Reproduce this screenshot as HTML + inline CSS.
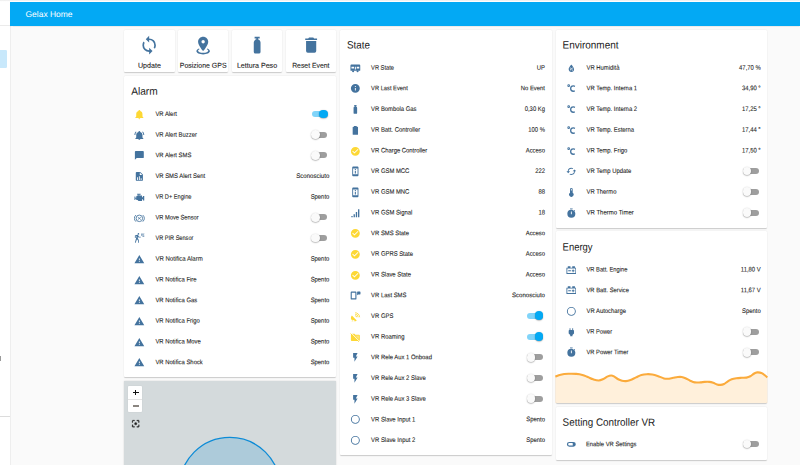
<!DOCTYPE html>
<html><head><meta charset="utf-8"><title>Gelax Home</title>
<style>
html,body{margin:0;padding:0}
body{width:800px;height:465px;overflow:hidden;position:relative;background:#fafafa;font-family:"Liberation Sans",sans-serif;color:#212121}
.side{position:absolute;left:0;top:0;width:10.8px;height:465px;background:#fff;border-right:0.7px solid #eeeeee;box-sizing:border-box}
.sel{position:absolute;left:0;top:50.1px;width:7.05px;height:17.6px;background:#c8e8fb;border-radius:0 1.3px 1.3px 0}
.shl{position:absolute;left:0;top:25.2px;width:10.2px;height:0.6px;background:#ebebeb}
.sdiv{position:absolute;left:0;top:415.7px;width:10.2px;height:0.6px;background:#dcdcdc}
.topstrip{position:absolute;left:0;top:0;width:800px;height:2.0px;background:linear-gradient(#efefef 0,#f2f2f2 0.8px,#fdfdfd 1.0px,#fefefe 2px)}
.hdr{position:absolute;left:10.2px;top:1.95px;width:790px;height:24.1px;background:#03a9f4;box-shadow:0 0.5px 1px rgba(0,0,0,0.06)}
.htx{font-size:8.3px;line-height:10px;color:#fff !important}
.card{position:absolute;background:#fff;border-radius:0.9px;box-shadow:0 0.9px 0.8px rgba(0,0,0,0.105),0 0.3px 1.7px rgba(0,0,0,0.07),0 1.2px 0.4px -0.9px rgba(0,0,0,0.12)}
.title,.lbl,.btxt,.htx{position:absolute;left:0;top:0;white-space:nowrap;transform-origin:0 0;color:#212121}
.title{font-size:10.6px;line-height:12px}
.lbl{font-size:6.65px;line-height:10px;-webkit-text-stroke:0.09px #212121}
.btxt{font-size:7.1px;line-height:10px;-webkit-text-stroke:0.1px #212121}
.r{text-align:right;transform-origin:100% 0}
.c{text-align:center;transform-origin:50% 0}


.trk{position:absolute;width:15.9px;height:6px;border-radius:3px;background:#000;opacity:.38}
.trk.on{background:#03a9f4;opacity:.5}
.knob{position:absolute;width:8.6px;height:8.6px;border-radius:50%;background:#fafafa;box-shadow:0 0.5px 1.3px rgba(0,0,0,0.42)}
.knob.on{background:#03a9f4}
.map{position:absolute;background:#d4dadc;overflow:hidden;border-radius:1px;box-shadow:0 0.9px 0.9px rgba(0,0,0,0.14),0 0.4px 2.1px rgba(0,0,0,0.12)}
.zoom{position:absolute;background:#fff;border-radius:0.8px;box-shadow:0 0 1px rgba(0,0,0,0.18)}
</style></head><body>
<div class="side"><div class="sel"></div><div class="shl"></div><div style="position:absolute;left:0;top:356px;width:0.9px;height:4.8px;background:#9a9a9a"></div><div class="sdiv"></div></div>
<div class="topstrip"></div>
<div class="hdr"></div>
<div class="htx" style="transform:matrix(1.02,0.0005,0,1,25.50,9.02)">Gelax Home</div>
<div class="card" style="left:124.2px;top:29.7px;width:50.4px;height:42px"></div>
<svg style="position:absolute;left:139.10px;top:34.85px" width="20.3" height="20.3" viewBox="0 0 24 24"><path fill="#44739e" d="M12,18A6,6 0 0,1 6,12C6,11 6.25,10.03 6.7,9.2L5.24,7.74C4.46,8.97 4,10.43 4,12A8,8 0 0,0 12,20V23L16,19L12,15M12,4V1L8,5L12,9V6A6,6 0 0,1 18,12C18,13 17.75,13.97 17.3,14.8L18.76,16.26C19.54,15.03 20,13.57 20,12A8,8 0 0,0 12,4Z"/></svg>
<div class="btxt c" style="width:298.80px;transform:matrix(1.0,0.0005,0,1,0,60.74)">Update</div>
<div class="card" style="left:178.0px;top:29.7px;width:50.4px;height:42px"></div>
<svg style="position:absolute;left:192.90px;top:34.85px" width="20.3" height="20.3" viewBox="0 0 24 24"><path fill="#44739e" d="M12,2C15.31,2 18,4.66 18,7.95C18,12.41 12,19 12,19C12,19 6,12.41 6,7.95C6,4.66 8.69,2 12,2M12,6A2,2 0 0,0 10,8A2,2 0 0,0 12,10A2,2 0 0,0 14,8A2,2 0 0,0 12,6M20,19C20,21.21 16.42,23 12,23C7.58,23 4,21.21 4,19C4,17.71 5.22,16.56 7.11,15.83L7.75,16.74C6.67,17.19 6,17.81 6,18.5C6,19.88 8.69,21 12,21C15.31,21 18,19.88 18,18.5C18,17.81 17.33,17.19 16.25,16.74L16.89,15.83C18.78,16.56 20,17.71 20,19Z"/></svg>
<div class="btxt c" style="width:406.40px;transform:matrix(0.979,0.0005,0,1,0,60.74)">Posizione GPS</div>
<div class="card" style="left:231.8px;top:29.7px;width:50.4px;height:42px"></div>
<svg style="position:absolute;left:246.70px;top:34.85px" width="20.3" height="20.3" viewBox="0 0 24 24"><path fill="#44739e" d="M16,9V14L16,20A2,2 0 0,1 14,22H10A2,2 0 0,1 8,20V14L8,9C8,7.14 9.27,5.57 11,5.13V4H9V2H15V4H13V5.13C14.73,5.57 16,7.14 16,9Z"/></svg>
<div class="btxt c" style="width:514.00px;transform:matrix(1.0,0.0005,0,1,0,60.74)">Lettura Peso</div>
<div class="card" style="left:285.6px;top:29.7px;width:50.4px;height:42px"></div>
<svg style="position:absolute;left:300.50px;top:34.85px" width="20.3" height="20.3" viewBox="0 0 24 24"><path fill="#44739e" d="M19,4H15.5L14.5,3H9.5L8.5,4H5V6H19M6,19A2,2 0 0,0 8,21H16A2,2 0 0,0 18,19V7H6V19Z"/></svg>
<div class="btxt c" style="width:621.60px;transform:matrix(0.9638,0.0005,0,1,0,60.74)">Reset Event</div>
<div class="card" style="left:124.2px;top:76.00px;width:211.8px;height:301.00px"></div>
<div class="title" style="transform:matrix(0.9579,0.0005,0,1,131.20,84.83)">Alarm</div>
<svg style="position:absolute;left:134.30px;top:109.05px" width="10.7" height="10.7" viewBox="0 0 24 24"><path fill="#fdd835" d="M21,19V20H3V19L5,17V11C5,7.9 7.03,5.17 10,4.29C10,4.19 10,4.1 10,4A2,2 0 0,1 12,2A2,2 0 0,1 14,4C14,4.1 14,4.19 14,4.29C16.97,5.17 19,7.9 19,11V17L21,19M14,21A2,2 0 0,1 12,23A2,2 0 0,1 10,21"/></svg>
<div class="lbl" style="transform:matrix(0.8855,0.0005,0,1,155.40,108.95)">VR Alert</div>
<div class="trk on" style="left:311.50px;top:111.00px"></div><div class="knob on" style="left:318.95px;top:109.50px"></div>
<svg style="position:absolute;left:134.30px;top:129.74px" width="10.7" height="10.7" viewBox="0 0 24 24"><path fill="#44739e" d="M21,19V20H3V19L5,17V11C5,7.9 7.03,5.17 10,4.29C10,4.19 10,4.1 10,4A2,2 0 0,1 12,2A2,2 0 0,1 14,4C14,4.1 14,4.19 14,4.29C16.97,5.17 19,7.9 19,11V17L21,19M14,21A2,2 0 0,1 12,23A2,2 0 0,1 10,21M19.75,3.19L18.33,4.61C20.04,6.3 21,8.6 21,11H23C23,8.07 21.84,5.25 19.75,3.19M1,11H3C3,8.6 3.96,6.3 5.67,4.61L4.25,3.19C2.16,5.25 1,8.07 1,11Z"/></svg>
<div class="lbl" style="transform:matrix(0.8855,0.0005,0,1,155.40,129.64)">VR Alert Buzzer</div>
<div class="trk" style="left:311.50px;top:131.69px"></div><div class="knob" style="left:311.15px;top:130.34px"></div>
<svg style="position:absolute;left:134.30px;top:150.43px" width="10.7" height="10.7" viewBox="0 0 24 24"><path fill="#44739e" d="M20,2H4A2,2 0 0,0 2,4V22L6,18H20A2,2 0 0,0 22,16V4A2,2 0 0,0 20,2Z"/></svg>
<div class="lbl" style="transform:matrix(0.8855,0.0005,0,1,155.40,150.33)">VR Alert SMS</div>
<div class="trk" style="left:311.50px;top:152.38px"></div><div class="knob" style="left:311.15px;top:151.03px"></div>
<svg style="position:absolute;left:134.30px;top:171.12px" width="10.7" height="10.7" viewBox="0 0 24 24"><path fill="#44739e" d="M13,9H18.5L13,3.5V9M6,2H14L20,8V20A2,2 0 0,1 18,22H6C4.89,22 4,21.1 4,20V4C4,2.89 4.89,2 6,2M7,20H9V14H7V20M11,20H13V12H11V20M15,20H17V16H15V20Z"/></svg>
<div class="lbl" style="transform:matrix(0.8855,0.0005,0,1,155.40,171.02)">VR SMS Alert Sent</div>
<div class="lbl r" style="width:329.30px;transform:matrix(0.9132,0.0005,0,1,0,171.02)">Sconosciuto</div>
<svg style="position:absolute;left:134.30px;top:191.81px" width="10.7" height="10.7" viewBox="0 0 24 24"><path fill="#44739e" d="M7,4V6H10V8H7L5,10V13H3V10H1V18H3V15H5V18H8L10,20H18V16H20V19H23V9H20V12H18V8H12V6H15V4H7Z"/></svg>
<div class="lbl" style="transform:matrix(0.8524,0.0005,0,1,155.40,191.71)">VR D+ Engine</div>
<div class="lbl r" style="width:329.30px;transform:matrix(0.8855,0.0005,0,1,0,191.71)">Spento</div>
<svg style="position:absolute;left:134.30px;top:212.50px" width="10.7" height="10.7" viewBox="0 0 24 24"><circle cx="12" cy="12" r="7.3" fill="none" stroke="#44739e" stroke-width="1.9"/><path fill="none" stroke="#44739e" stroke-width="1.6" d="M8.6,9.2L15.4,14.8M15.4,9.2L8.6,14.8"/><path fill="none" stroke="#44739e" stroke-width="1.9" d="M4.2,4.6A10.8,10.8 0 0,0 4.2,19.4M19.8,4.6A10.8,10.8 0 0,1 19.8,19.4"/></svg>
<div class="lbl" style="transform:matrix(0.8616,0.0005,0,1,155.40,212.40)">VR Move Sensor</div>
<div class="trk" style="left:311.50px;top:214.45px"></div><div class="knob" style="left:311.15px;top:213.10px"></div>
<svg style="position:absolute;left:134.30px;top:233.19px" width="10.7" height="10.7" viewBox="0 0 24 24"><path fill="#44739e" d="M10,0.2C9,0.2 8.2,1 8.2,2C8.2,3 9,3.8 10,3.8C11,3.8 11.8,3 11.8,2C11.8,1 11,0.2 10,0.2M15.67,1A7.33,7.33 0 0,0 23,8.33V7A6,6 0 0,1 17,1H15.67M18.33,1C18.33,3.58 20.42,5.67 23,5.67V4.33C21.16,4.33 19.67,2.84 19.67,1H18.33M21,1A2,2 0 0,0 23,3V1H21M7.92,4.03C7.75,4.03 7.58,4.06 7.42,4.11L2,5.8V11H3.8V7.33L5.91,6.67L2,22H3.8L6.67,13.89L9,17V22H10.8V15.59L8.31,11.05L9.04,8.18L10.12,10H15V8.2H11.38L9.38,4.87C9.08,4.37 8.54,4.03 7.92,4.03Z"/></svg>
<div class="lbl" style="transform:matrix(0.8433,0.0005,0,1,155.40,233.09)">VR PIR Sensor</div>
<div class="trk" style="left:311.50px;top:235.14px"></div><div class="knob" style="left:311.15px;top:233.79px"></div>
<svg style="position:absolute;left:134.30px;top:253.88px" width="10.7" height="10.7" viewBox="0 0 24 24"><path fill="#44739e" d="M13,14H11V10H13M13,18H11V16H13M1,21H23L12,2L1,21Z"/></svg>
<div class="lbl" style="transform:matrix(0.9105,0.0005,0,1,155.40,253.78)">VR Notifica Alarm</div>
<div class="lbl r" style="width:329.30px;transform:matrix(0.8855,0.0005,0,1,0,253.78)">Spento</div>
<svg style="position:absolute;left:134.30px;top:274.57px" width="10.7" height="10.7" viewBox="0 0 24 24"><path fill="#44739e" d="M13,14H11V10H13M13,18H11V16H13M1,21H23L12,2L1,21Z"/></svg>
<div class="lbl" style="transform:matrix(0.8855,0.0005,0,1,155.40,274.47)">VR Notifica Fire</div>
<div class="lbl r" style="width:329.30px;transform:matrix(0.8855,0.0005,0,1,0,274.47)">Spento</div>
<svg style="position:absolute;left:134.30px;top:295.26px" width="10.7" height="10.7" viewBox="0 0 24 24"><path fill="#44739e" d="M13,14H11V10H13M13,18H11V16H13M1,21H23L12,2L1,21Z"/></svg>
<div class="lbl" style="transform:matrix(0.8855,0.0005,0,1,155.40,295.16)">VR Notifica Gas</div>
<div class="lbl r" style="width:329.30px;transform:matrix(0.8855,0.0005,0,1,0,295.16)">Spento</div>
<svg style="position:absolute;left:134.30px;top:315.95px" width="10.7" height="10.7" viewBox="0 0 24 24"><path fill="#44739e" d="M13,14H11V10H13M13,18H11V16H13M1,21H23L12,2L1,21Z"/></svg>
<div class="lbl" style="transform:matrix(0.8855,0.0005,0,1,155.40,315.85)">VR Notifica Frigo</div>
<div class="lbl r" style="width:329.30px;transform:matrix(0.8855,0.0005,0,1,0,315.85)">Spento</div>
<svg style="position:absolute;left:134.30px;top:336.64px" width="10.7" height="10.7" viewBox="0 0 24 24"><path fill="#44739e" d="M13,14H11V10H13M13,18H11V16H13M1,21H23L12,2L1,21Z"/></svg>
<div class="lbl" style="transform:matrix(0.8855,0.0005,0,1,155.40,336.54)">VR Notifica Move</div>
<div class="lbl r" style="width:329.30px;transform:matrix(0.8855,0.0005,0,1,0,336.54)">Spento</div>
<svg style="position:absolute;left:134.30px;top:357.33px" width="10.7" height="10.7" viewBox="0 0 24 24"><path fill="#44739e" d="M13,14H11V10H13M13,18H11V16H13M1,21H23L12,2L1,21Z"/></svg>
<div class="lbl" style="transform:matrix(0.8855,0.0005,0,1,155.40,357.23)">VR Notifica Shock</div>
<div class="lbl r" style="width:329.30px;transform:matrix(0.8855,0.0005,0,1,0,357.23)">Spento</div>

<div class="card" style="left:339.9px;top:29.70px;width:211.8px;height:425.30px"></div>
<div class="title" style="transform:matrix(0.93,0.0005,0,1,346.90,38.53)">State</div>
<svg style="position:absolute;left:350.00px;top:62.75px" width="10.7" height="10.7" viewBox="0 0 24 24"><path fill="#44739e" fill-rule="evenodd" d="M3,3.5H21A2,2 0 0,1 23,5.5V16A1.2,1.2 0 0,1 21.8,17.2H2.2A1.2,1.2 0 0,1 1,16V5.5A2,2 0 0,1 3,3.5ZM3.2,8.2V12.2H9V8.2ZM10.8,8.2V14.5H13.2V8.2ZM15,8.2V12.2H20.8V8.2Z"/><circle fill="#44739e" cx="7" cy="18.6" r="2.3"/><circle fill="#44739e" cx="17" cy="18.6" r="2.3"/></svg>
<div class="lbl" style="transform:matrix(0.8591,0.0005,0,1,371.10,62.65)">VR State</div>
<div class="lbl r" style="width:545.00px;transform:matrix(0.8855,0.0005,0,1,0,62.65)">UP</div>
<svg style="position:absolute;left:350.00px;top:83.44px" width="10.7" height="10.7" viewBox="0 0 24 24"><path fill="#44739e" d="M13,9H11V7H13M13,17H11V11H13M12,2A10,10 0 0,0 2,12A10,10 0 0,0 12,22A10,10 0 0,0 22,12A10,10 0 0,0 12,2Z"/></svg>
<div class="lbl" style="transform:matrix(0.8643,0.0005,0,1,371.10,83.34)">VR Last Event</div>
<div class="lbl r" style="width:545.00px;transform:matrix(0.8855,0.0005,0,1,0,83.34)">No Event</div>
<svg style="position:absolute;left:350.00px;top:104.13px" width="10.7" height="10.7" viewBox="0 0 24 24"><path fill="#44739e" d="M16,9V14L16,20A2,2 0 0,1 14,22H10A2,2 0 0,1 8,20V14L8,9C8,7.14 9.27,5.57 11,5.13V4H9V2H15V4H13V5.13C14.73,5.57 16,7.14 16,9Z"/></svg>
<div class="lbl" style="transform:matrix(0.8855,0.0005,0,1,371.10,104.03)">VR Bombola Gas</div>
<div class="lbl r" style="width:545.00px;transform:matrix(0.8855,0.0005,0,1,0,104.03)">0,30 Kg</div>
<svg style="position:absolute;left:350.00px;top:124.82px" width="10.7" height="10.7" viewBox="0 0 24 24"><path fill="#44739e" d="M16.67,4H15V2H9V4H7.33A1.33,1.33 0 0,0 6,5.33V20.67C6,21.4 6.6,22 7.33,22H16.67A1.33,1.33 0 0,0 18,20.67V5.33C18,4.6 17.4,4 16.67,4Z"/></svg>
<div class="lbl" style="transform:matrix(0.8855,0.0005,0,1,371.10,124.72)">VR Batt. Controller</div>
<div class="lbl r" style="width:545.00px;transform:matrix(0.8855,0.0005,0,1,0,124.72)">100 %</div>
<svg style="position:absolute;left:350.00px;top:145.51px" width="10.7" height="10.7" viewBox="0 0 24 24"><path fill="#fdd835" d="M12,2A10,10 0 0,0 2,12A10,10 0 0,0 12,22A10,10 0 0,0 22,12A10,10 0 0,0 12,2M10,17L5,12L6.41,10.59L10,14.17L17.59,6.58L19,8L10,17Z"/></svg>
<div class="lbl" style="transform:matrix(0.8855,0.0005,0,1,371.10,145.41)">VR Charge Controller</div>
<div class="lbl r" style="width:545.00px;transform:matrix(0.8855,0.0005,0,1,0,145.41)">Acceso</div>
<svg style="position:absolute;left:350.00px;top:166.20px" width="10.7" height="10.7" viewBox="0 0 24 24"><path fill="#44739e" d="M17,18.5H7V5.5H17M17,1H7C5.89,1 5,1.89 5,3V21A2,2 0 0,0 7,23H17A2,2 0 0,0 19,21V3C19,1.89 18.1,1 17,1M10.8,7H13.2V9.2H10.8V7M10.8,10.8H13.2V17H10.8V10.8Z"/></svg>
<div class="lbl" style="transform:matrix(0.8855,0.0005,0,1,371.10,166.10)">VR GSM MCC</div>
<div class="lbl r" style="width:545.00px;transform:matrix(0.8855,0.0005,0,1,0,166.10)">222</div>
<svg style="position:absolute;left:350.00px;top:186.89px" width="10.7" height="10.7" viewBox="0 0 24 24"><path fill="#44739e" d="M17,18.5H7V5.5H17M17,1H7C5.89,1 5,1.89 5,3V21A2,2 0 0,0 7,23H17A2,2 0 0,0 19,21V3C19,1.89 18.1,1 17,1M10.8,7H13.2V9.2H10.8V7M10.8,10.8H13.2V17H10.8V10.8Z"/></svg>
<div class="lbl" style="transform:matrix(0.8855,0.0005,0,1,371.10,186.79)">VR GSM MNC</div>
<div class="lbl r" style="width:545.00px;transform:matrix(0.8855,0.0005,0,1,0,186.79)">88</div>
<svg style="position:absolute;left:350.00px;top:207.58px" width="10.7" height="10.7" viewBox="0 0 24 24"><path fill="#44739e" d="M3,21H6V18H3M8,21H11V14H8M13,21H16V9H13M18,21H21V3H18V21Z"/></svg>
<div class="lbl" style="transform:matrix(0.8855,0.0005,0,1,371.10,207.48)">VR GSM Signal</div>
<div class="lbl r" style="width:545.00px;transform:matrix(0.8855,0.0005,0,1,0,207.48)">18</div>
<svg style="position:absolute;left:350.00px;top:228.27px" width="10.7" height="10.7" viewBox="0 0 24 24"><path fill="#fdd835" d="M12,2A10,10 0 0,0 2,12A10,10 0 0,0 12,22A10,10 0 0,0 22,12A10,10 0 0,0 12,2M10,17L5,12L6.41,10.59L10,14.17L17.59,6.58L19,8L10,17Z"/></svg>
<div class="lbl" style="transform:matrix(0.8855,0.0005,0,1,371.10,228.17)">VR SMS State</div>
<div class="lbl r" style="width:545.00px;transform:matrix(0.8855,0.0005,0,1,0,228.17)">Acceso</div>
<svg style="position:absolute;left:350.00px;top:248.96px" width="10.7" height="10.7" viewBox="0 0 24 24"><path fill="#fdd835" d="M12,2A10,10 0 0,0 2,12A10,10 0 0,0 12,22A10,10 0 0,0 22,12A10,10 0 0,0 12,2M10,17L5,12L6.41,10.59L10,14.17L17.59,6.58L19,8L10,17Z"/></svg>
<div class="lbl" style="transform:matrix(0.8855,0.0005,0,1,371.10,248.86)">VR GPRS State</div>
<div class="lbl r" style="width:545.00px;transform:matrix(0.8855,0.0005,0,1,0,248.86)">Acceso</div>
<svg style="position:absolute;left:350.00px;top:269.65px" width="10.7" height="10.7" viewBox="0 0 24 24"><path fill="#fdd835" d="M12,2A10,10 0 0,0 2,12A10,10 0 0,0 12,22A10,10 0 0,0 22,12A10,10 0 0,0 12,2M10,17L5,12L6.41,10.59L10,14.17L17.59,6.58L19,8L10,17Z"/></svg>
<div class="lbl" style="transform:matrix(0.8855,0.0005,0,1,371.10,269.55)">VR Slave State</div>
<div class="lbl r" style="width:545.00px;transform:matrix(0.8855,0.0005,0,1,0,269.55)">Acceso</div>
<svg style="position:absolute;left:350.00px;top:290.34px" width="10.7" height="10.7" viewBox="0 0 24 24"><path fill="#44739e" fill-rule="evenodd" d="M3.5,3.5H12.5A2,2 0 0,1 14.5,5.5V19.5A2,2 0 0,1 12.5,21.5H3.5A2,2 0 0,1 1.5,19.5V5.5A2,2 0 0,1 3.5,3.5ZM4,6V18.5H12V6Z"/><path fill="#44739e" d="M17,3.5H22.5A1,1 0 0,1 23.5,4.5V9A1,1 0 0,1 22.5,10H18.5L16,12V4.5A1,1 0 0,1 17,3.5Z"/></svg>
<div class="lbl" style="transform:matrix(0.8855,0.0005,0,1,371.10,290.24)">VR Last SMS</div>
<div class="lbl r" style="width:545.00px;transform:matrix(0.9132,0.0005,0,1,0,290.24)">Sconosciuto</div>
<svg style="position:absolute;left:350.00px;top:311.03px" width="10.7" height="10.7" viewBox="0 0 24 24"><path fill="#fdd835" d="M4.2,10.3L15.2,21.3A7.8,7.8 0 0,1 4.2,10.3ZM6,19.5L3.5,23H12L9.5,21.5Z"/><path fill="none" stroke="#fdd835" stroke-width="1.8" d="M11.5,10.5A3.5,3.5 0 0,1 15,14M11.5,7.2A6.8,6.8 0 0,1 18.3,14M11.5,3.9A10.1,10.1 0 0,1 21.6,14"/></svg>
<div class="lbl" style="transform:matrix(0.8855,0.0005,0,1,371.10,310.93)">VR GPS</div>
<div class="trk on" style="left:527.20px;top:312.98px"></div><div class="knob on" style="left:534.65px;top:311.48px"></div>
<svg style="position:absolute;left:350.00px;top:331.72px" width="10.7" height="10.7" viewBox="0 0 24 24"><path fill="#fdd835" d="M4,4H10L12,6H20A2,2 0 0,1 22,8V18A2,2 0 0,1 20,20H4A2,2 0 0,1 2,18V6A2,2 0 0,1 4,4Z"/><path stroke="#fff" stroke-width="2" d="M2.4,2L22,21.6" fill="none"/><path stroke="#fdd835" stroke-width="1.6" d="M1,3.2L20.6,22.8" fill="none"/><path fill="#fff" fill-opacity="0.35" d="M12,8H20V16Z"/></svg>
<div class="lbl" style="transform:matrix(0.8855,0.0005,0,1,371.10,331.62)">VR Roaming</div>
<div class="trk on" style="left:527.20px;top:333.67px"></div><div class="knob on" style="left:534.65px;top:332.17px"></div>
<svg style="position:absolute;left:350.00px;top:352.41px" width="10.7" height="10.7" viewBox="0 0 24 24"><path fill="#44739e" d="M7,2V13H10V22L17,10H13L17,2H7Z"/></svg>
<div class="lbl" style="transform:matrix(0.8855,0.0005,0,1,371.10,352.31)">VR Rele Aux 1 Onboad</div>
<div class="trk" style="left:527.20px;top:354.36px"></div><div class="knob" style="left:526.85px;top:353.01px"></div>
<svg style="position:absolute;left:350.00px;top:373.10px" width="10.7" height="10.7" viewBox="0 0 24 24"><path fill="#44739e" d="M7,2V13H10V22L17,10H13L17,2H7Z"/></svg>
<div class="lbl" style="transform:matrix(0.8855,0.0005,0,1,371.10,373.00)">VR Rele Aux 2 Slave</div>
<div class="trk" style="left:527.20px;top:375.05px"></div><div class="knob" style="left:526.85px;top:373.70px"></div>
<svg style="position:absolute;left:350.00px;top:393.79px" width="10.7" height="10.7" viewBox="0 0 24 24"><path fill="#44739e" d="M7,2V13H10V22L17,10H13L17,2H7Z"/></svg>
<div class="lbl" style="transform:matrix(0.8855,0.0005,0,1,371.10,393.69)">VR Rele Aux 3 Slave</div>
<div class="trk" style="left:527.20px;top:395.74px"></div><div class="knob" style="left:526.85px;top:394.39px"></div>
<svg style="position:absolute;left:350.00px;top:414.48px" width="10.7" height="10.7" viewBox="0 0 24 24"><path fill="#44739e" d="M12,20A8,8 0 0,1 4,12A8,8 0 0,1 12,4A8,8 0 0,1 20,12A8,8 0 0,1 12,20M12,2A10,10 0 0,0 2,12A10,10 0 0,0 12,22A10,10 0 0,0 22,12A10,10 0 0,0 12,2Z"/></svg>
<div class="lbl" style="transform:matrix(0.8855,0.0005,0,1,371.10,414.38)">VR Slave Input 1</div>
<div class="lbl r" style="width:545.00px;transform:matrix(0.8855,0.0005,0,1,0,414.38)">Spento</div>
<svg style="position:absolute;left:350.00px;top:435.17px" width="10.7" height="10.7" viewBox="0 0 24 24"><path fill="#44739e" d="M12,20A8,8 0 0,1 4,12A8,8 0 0,1 12,4A8,8 0 0,1 20,12A8,8 0 0,1 12,20M12,2A10,10 0 0,0 2,12A10,10 0 0,0 12,22A10,10 0 0,0 22,12A10,10 0 0,0 12,2Z"/></svg>
<div class="lbl" style="transform:matrix(0.8855,0.0005,0,1,371.10,435.07)">VR Slave Input 2</div>
<div class="lbl r" style="width:545.00px;transform:matrix(0.8855,0.0005,0,1,0,435.07)">Spento</div>

<div class="card" style="left:555.6px;top:29.70px;width:211.8px;height:198.20px"></div>
<div class="title" style="transform:matrix(0.9393,0.0005,0,1,562.60,38.53)">Environment</div>
<svg style="position:absolute;left:565.70px;top:62.75px" width="10.7" height="10.7" viewBox="0 0 24 24"><path fill="#44739e" d="M12,3.25C12,3.25 6,10 6,14C6,17.32 8.69,20 12,20A6,6 0 0,0 18,14C18,10 12,3.25 12,3.25M14.47,9.97L15.53,11.03L9.53,17.03L8.47,15.97M9.75,10A1.25,1.25 0 0,1 11,11.25A1.25,1.25 0 0,1 9.75,12.5A1.25,1.25 0 0,1 8.5,11.25A1.25,1.25 0 0,1 9.75,10M14.25,14.5A1.25,1.25 0 0,1 15.5,15.75A1.25,1.25 0 0,1 14.25,17A1.25,1.25 0 0,1 13,15.75A1.25,1.25 0 0,1 14.25,14.5Z"/></svg>
<div class="lbl" style="transform:matrix(0.8855,0.0005,0,1,586.50,62.65)">VR Humidità</div>
<div class="lbl r" style="width:760.70px;transform:matrix(0.8855,0.0005,0,1,0,62.65)">47,70 %</div>
<svg style="position:absolute;left:565.70px;top:83.44px" width="10.7" height="10.7" viewBox="0 0 24 24"><path fill="#44739e" d="M16.5,5C18.05,5 19.5,5.47 20.69,6.28L19.53,9.17C18.73,8.44 17.67,8 16.5,8C14,8 12,10 12,12.5C12,15 14,17 16.5,17C17.53,17 18.47,16.66 19.23,16.08L20.37,18.93C19.24,19.61 17.92,20 16.5,20A7.5,7.5 0 0,1 9,12.5A7.5,7.5 0 0,1 16.5,5M6,3A3,3 0 0,1 9,6A3,3 0 0,1 6,9A3,3 0 0,1 3,6A3,3 0 0,1 6,3M6,5A1,1 0 0,0 5,6A1,1 0 0,0 6,7A1,1 0 0,0 7,6A1,1 0 0,0 6,5Z"/></svg>
<div class="lbl" style="transform:matrix(0.8855,0.0005,0,1,586.50,83.34)">VR Temp. Interna 1</div>
<div class="lbl r" style="width:760.70px;transform:matrix(0.8855,0.0005,0,1,0,83.34)">34,90 °</div>
<svg style="position:absolute;left:565.70px;top:104.13px" width="10.7" height="10.7" viewBox="0 0 24 24"><path fill="#44739e" d="M16.5,5C18.05,5 19.5,5.47 20.69,6.28L19.53,9.17C18.73,8.44 17.67,8 16.5,8C14,8 12,10 12,12.5C12,15 14,17 16.5,17C17.53,17 18.47,16.66 19.23,16.08L20.37,18.93C19.24,19.61 17.92,20 16.5,20A7.5,7.5 0 0,1 9,12.5A7.5,7.5 0 0,1 16.5,5M6,3A3,3 0 0,1 9,6A3,3 0 0,1 6,9A3,3 0 0,1 3,6A3,3 0 0,1 6,3M6,5A1,1 0 0,0 5,6A1,1 0 0,0 6,7A1,1 0 0,0 7,6A1,1 0 0,0 6,5Z"/></svg>
<div class="lbl" style="transform:matrix(0.8855,0.0005,0,1,586.50,104.03)">VR Temp. Interna 2</div>
<div class="lbl r" style="width:760.70px;transform:matrix(0.8855,0.0005,0,1,0,104.03)">17,25 °</div>
<svg style="position:absolute;left:565.70px;top:124.82px" width="10.7" height="10.7" viewBox="0 0 24 24"><path fill="#44739e" d="M16.5,5C18.05,5 19.5,5.47 20.69,6.28L19.53,9.17C18.73,8.44 17.67,8 16.5,8C14,8 12,10 12,12.5C12,15 14,17 16.5,17C17.53,17 18.47,16.66 19.23,16.08L20.37,18.93C19.24,19.61 17.92,20 16.5,20A7.5,7.5 0 0,1 9,12.5A7.5,7.5 0 0,1 16.5,5M6,3A3,3 0 0,1 9,6A3,3 0 0,1 6,9A3,3 0 0,1 3,6A3,3 0 0,1 6,3M6,5A1,1 0 0,0 5,6A1,1 0 0,0 6,7A1,1 0 0,0 7,6A1,1 0 0,0 6,5Z"/></svg>
<div class="lbl" style="transform:matrix(0.8855,0.0005,0,1,586.50,124.72)">VR Temp. Esterna</div>
<div class="lbl r" style="width:760.70px;transform:matrix(0.8855,0.0005,0,1,0,124.72)">17,44 °</div>
<svg style="position:absolute;left:565.70px;top:145.51px" width="10.7" height="10.7" viewBox="0 0 24 24"><path fill="#44739e" d="M16.5,5C18.05,5 19.5,5.47 20.69,6.28L19.53,9.17C18.73,8.44 17.67,8 16.5,8C14,8 12,10 12,12.5C12,15 14,17 16.5,17C17.53,17 18.47,16.66 19.23,16.08L20.37,18.93C19.24,19.61 17.92,20 16.5,20A7.5,7.5 0 0,1 9,12.5A7.5,7.5 0 0,1 16.5,5M6,3A3,3 0 0,1 9,6A3,3 0 0,1 6,9A3,3 0 0,1 3,6A3,3 0 0,1 6,3M6,5A1,1 0 0,0 5,6A1,1 0 0,0 6,7A1,1 0 0,0 7,6A1,1 0 0,0 6,5Z"/></svg>
<div class="lbl" style="transform:matrix(0.8855,0.0005,0,1,586.50,145.41)">VR Temp. Frigo</div>
<div class="lbl r" style="width:760.70px;transform:matrix(0.8855,0.0005,0,1,0,145.41)">17,50 °</div>
<svg style="position:absolute;left:565.70px;top:166.20px" width="10.7" height="10.7" viewBox="0 0 24 24"><path fill="#44739e" d="M19,8L15,12H18A6,6 0 0,1 12,18C11,18 10.03,17.75 9.2,17.3L7.74,18.76C8.97,19.54 10.43,20 12,20A8,8 0 0,0 20,12H23M6,12A6,6 0 0,1 12,6C13,6 13.97,6.25 14.8,6.7L16.26,5.24C15.03,4.46 13.57,4 12,4A8,8 0 0,0 4,12H1L5,16L9,12"/></svg>
<div class="lbl" style="transform:matrix(0.8855,0.0005,0,1,586.50,166.10)">VR Temp Update</div>
<div class="trk" style="left:742.90px;top:168.15px"></div><div class="knob" style="left:742.55px;top:166.80px"></div>
<svg style="position:absolute;left:565.70px;top:186.89px" width="10.7" height="10.7" viewBox="0 0 24 24"><path fill="#44739e" d="M15,13V5A3,3 0 0,0 9,5V13A5,5 0 1,0 15,13M12,4A1,1 0 0,1 13,5V8H11V5A1,1 0 0,1 12,4Z"/></svg>
<div class="lbl" style="transform:matrix(0.8855,0.0005,0,1,586.50,186.79)">VR Thermo</div>
<div class="trk" style="left:742.90px;top:188.84px"></div><div class="knob" style="left:742.55px;top:187.49px"></div>
<svg style="position:absolute;left:565.70px;top:207.58px" width="10.7" height="10.7" viewBox="0 0 24 24"><path fill="#44739e" d="M12,22A9,9 0 0,1 3,13A9,9 0 0,1 12,4C14.12,4 16.07,4.74 17.62,6L19.04,4.56C19.55,5 20,5.46 20.45,5.97L19.03,7.39C20.26,8.93 21,10.88 21,13A9,9 0 0,1 12,22M11,8V14H13V8H11M9,1H15V3H9V1Z"/></svg>
<div class="lbl" style="transform:matrix(0.9046,0.0005,0,1,586.50,207.48)">VR Thermo Timer</div>
<div class="trk" style="left:742.90px;top:209.53px"></div><div class="knob" style="left:742.55px;top:208.18px"></div>

<div class="card" style="left:555.6px;top:231.20px;width:211.8px;height:171.90px"></div>
<div class="title" style="transform:matrix(0.8928,0.0005,0,1,562.60,240.43)">Energy</div>
<svg style="position:absolute;left:565.70px;top:264.65px" width="10.7" height="10.7" viewBox="0 0 24 24"><path fill="#44739e" d="M4,3V6H1V20H23V6H20V3H14V6H10V3H4M3,8H21V18H3V8M15,10V12H13V14H15V16H17V14H19V12H17V10H15M5,12V14H11V12H5Z"/></svg>
<div class="lbl" style="transform:matrix(0.8643,0.0005,0,1,586.50,264.55)">VR Batt. Engine</div>
<div class="lbl r" style="width:760.70px;transform:matrix(0.8855,0.0005,0,1,0,264.55)">11,80 V</div>
<svg style="position:absolute;left:565.70px;top:285.34px" width="10.7" height="10.7" viewBox="0 0 24 24"><path fill="#44739e" d="M4,3V6H1V20H23V6H20V3H14V6H10V3H4M3,8H21V18H3V8M15,10V12H13V14H15V16H17V14H19V12H17V10H15M5,12V14H11V12H5Z"/></svg>
<div class="lbl" style="transform:matrix(0.8722,0.0005,0,1,586.50,285.24)">VR Batt. Service</div>
<div class="lbl r" style="width:760.70px;transform:matrix(0.8855,0.0005,0,1,0,285.24)">11,67 V</div>
<svg style="position:absolute;left:565.70px;top:306.03px" width="10.7" height="10.7" viewBox="0 0 24 24"><path fill="#44739e" d="M12,20A8,8 0 0,1 4,12A8,8 0 0,1 12,4A8,8 0 0,1 20,12A8,8 0 0,1 12,20M12,2A10,10 0 0,0 2,12A10,10 0 0,0 12,22A10,10 0 0,0 22,12A10,10 0 0,0 12,2Z"/></svg>
<div class="lbl" style="transform:matrix(0.8855,0.0005,0,1,586.50,305.93)">VR Autocharge</div>
<div class="lbl r" style="width:760.70px;transform:matrix(0.8855,0.0005,0,1,0,305.93)">Spento</div>
<svg style="position:absolute;left:565.70px;top:326.72px" width="10.7" height="10.7" viewBox="0 0 24 24"><path fill="#44739e" d="M16,7V3H14V7H10V3H8V7H8C7,7 6,8 6,9V14.5L9.5,18V21H14.5V18L18,14.5V9C18,8 17,7 16,7Z"/></svg>
<div class="lbl" style="transform:matrix(0.8545,0.0005,0,1,586.50,326.62)">VR Power</div>
<div class="trk" style="left:742.90px;top:328.67px"></div><div class="knob" style="left:742.55px;top:327.32px"></div>
<svg style="position:absolute;left:565.70px;top:347.41px" width="10.7" height="10.7" viewBox="0 0 24 24"><path fill="#44739e" d="M12,22A9,9 0 0,1 3,13A9,9 0 0,1 12,4C14.12,4 16.07,4.74 17.62,6L19.04,4.56C19.55,5 20,5.46 20.45,5.97L19.03,7.39C20.26,8.93 21,10.88 21,13A9,9 0 0,1 12,22M11,8V14H13V8H11M9,1H15V3H9V1Z"/></svg>
<div class="lbl" style="transform:matrix(0.8678,0.0005,0,1,586.50,347.31)">VR Power Timer</div>
<div class="trk" style="left:742.90px;top:349.36px"></div><div class="knob" style="left:742.55px;top:348.01px"></div>
<svg style="position:absolute;left:0;top:0" width="800" height="465" viewBox="0 0 800 465"><path d="M555.30,376.60C556.20,376.28 558.50,375.17 560.70,374.70C562.90,374.23 565.92,373.93 568.50,373.80C571.08,373.67 573.88,373.72 576.20,373.90C578.52,374.08 580.47,374.38 582.40,374.90C584.33,375.42 586.00,376.27 587.80,377.00C589.60,377.73 591.38,378.72 593.20,379.30C595.02,379.88 597.02,380.55 598.70,380.50C600.38,380.45 601.88,379.65 603.30,379.00C604.72,378.35 605.88,377.18 607.20,376.60C608.52,376.02 610.02,375.50 611.20,375.50C612.38,375.50 613.13,375.97 614.30,376.60C615.47,377.23 616.92,378.62 618.20,379.30C619.48,379.98 620.72,380.40 622.00,380.70C623.28,381.00 624.48,381.22 625.90,381.10C627.32,380.98 628.82,380.62 630.50,380.00C632.18,379.38 634.18,378.22 636.00,377.40C637.82,376.58 639.60,375.63 641.40,375.10C643.20,374.57 645.00,374.30 646.80,374.20C648.60,374.10 650.40,374.22 652.20,374.50C654.00,374.78 655.65,375.25 657.60,375.90C659.55,376.55 662.22,377.92 663.90,378.40C665.58,378.88 666.15,378.90 667.70,378.80C669.25,378.70 671.52,378.10 673.20,377.80C674.88,377.50 676.38,377.13 677.80,377.00C679.22,376.87 680.42,376.80 681.70,377.00C682.98,377.20 684.08,377.58 685.50,378.20C686.92,378.82 688.65,380.00 690.20,380.70C691.75,381.40 693.13,382.12 694.80,382.40C696.47,382.68 698.57,382.48 700.20,382.40C701.83,382.32 703.08,381.98 704.60,381.90C706.12,381.82 707.87,381.75 709.30,381.90C710.73,382.05 711.92,382.38 713.20,382.80C714.48,383.22 715.78,384.05 717.00,384.40C718.22,384.75 719.33,384.97 720.50,384.90C721.67,384.83 722.77,384.60 724.00,384.00C725.23,383.40 726.62,382.10 727.90,381.30C729.18,380.50 730.28,379.72 731.70,379.20C733.12,378.68 734.72,378.43 736.40,378.20C738.08,377.97 740.13,377.90 741.80,377.80C743.47,377.70 744.98,377.85 746.40,377.60C747.82,377.35 749.00,376.98 750.30,376.30C751.60,375.62 753.03,374.15 754.20,373.50C755.37,372.85 756.33,372.55 757.30,372.40C758.27,372.25 759.17,372.43 760.00,372.60C760.83,372.77 761.50,372.95 762.30,373.40C763.10,373.85 763.95,374.63 764.80,375.30C765.65,375.97 766.97,377.05 767.40,377.40L767.40,403.1L555.30,403.1Z" fill="#ff9800" fill-opacity="0.14"/><path d="M555.30,376.60C556.20,376.28 558.50,375.17 560.70,374.70C562.90,374.23 565.92,373.93 568.50,373.80C571.08,373.67 573.88,373.72 576.20,373.90C578.52,374.08 580.47,374.38 582.40,374.90C584.33,375.42 586.00,376.27 587.80,377.00C589.60,377.73 591.38,378.72 593.20,379.30C595.02,379.88 597.02,380.55 598.70,380.50C600.38,380.45 601.88,379.65 603.30,379.00C604.72,378.35 605.88,377.18 607.20,376.60C608.52,376.02 610.02,375.50 611.20,375.50C612.38,375.50 613.13,375.97 614.30,376.60C615.47,377.23 616.92,378.62 618.20,379.30C619.48,379.98 620.72,380.40 622.00,380.70C623.28,381.00 624.48,381.22 625.90,381.10C627.32,380.98 628.82,380.62 630.50,380.00C632.18,379.38 634.18,378.22 636.00,377.40C637.82,376.58 639.60,375.63 641.40,375.10C643.20,374.57 645.00,374.30 646.80,374.20C648.60,374.10 650.40,374.22 652.20,374.50C654.00,374.78 655.65,375.25 657.60,375.90C659.55,376.55 662.22,377.92 663.90,378.40C665.58,378.88 666.15,378.90 667.70,378.80C669.25,378.70 671.52,378.10 673.20,377.80C674.88,377.50 676.38,377.13 677.80,377.00C679.22,376.87 680.42,376.80 681.70,377.00C682.98,377.20 684.08,377.58 685.50,378.20C686.92,378.82 688.65,380.00 690.20,380.70C691.75,381.40 693.13,382.12 694.80,382.40C696.47,382.68 698.57,382.48 700.20,382.40C701.83,382.32 703.08,381.98 704.60,381.90C706.12,381.82 707.87,381.75 709.30,381.90C710.73,382.05 711.92,382.38 713.20,382.80C714.48,383.22 715.78,384.05 717.00,384.40C718.22,384.75 719.33,384.97 720.50,384.90C721.67,384.83 722.77,384.60 724.00,384.00C725.23,383.40 726.62,382.10 727.90,381.30C729.18,380.50 730.28,379.72 731.70,379.20C733.12,378.68 734.72,378.43 736.40,378.20C738.08,377.97 740.13,377.90 741.80,377.80C743.47,377.70 744.98,377.85 746.40,377.60C747.82,377.35 749.00,376.98 750.30,376.30C751.60,375.62 753.03,374.15 754.20,373.50C755.37,372.85 756.33,372.55 757.30,372.40C758.27,372.25 759.17,372.43 760.00,372.60C760.83,372.77 761.50,372.95 762.30,373.40C763.10,373.85 763.95,374.63 764.80,375.30C765.65,375.97 766.97,377.05 767.40,377.40" fill="none" stroke="#fbab3c" stroke-width="2.1" stroke-linecap="butt" stroke-linejoin="round"/></svg>
<div class="card" style="left:555.6px;top:407.00px;width:211.8px;height:52.50px"></div>
<div class="title" style="transform:matrix(0.93,0.0005,0,1,562.60,415.83)">Setting Controller VR</div>
<svg style="position:absolute;left:565.70px;top:439.25px" width="10.7" height="10.7" viewBox="0 0 24 24"><path fill="#44739e" fill-rule="evenodd" d="M7.5,6.5H16.5A5.5,5.5 0 0,1 22,12A5.5,5.5 0 0,1 16.5,17.5H7.5A5.5,5.5 0 0,1 2,12A5.5,5.5 0 0,1 7.5,6.5ZM7.6,9.2A2.8,2.8 0 0,0 4.8,12A2.8,2.8 0 0,0 7.6,14.8H14.2A1,1 0 0,0 15.2,13.8V10.2A1,1 0 0,0 14.2,9.2Z"/></svg>
<div class="lbl" style="transform:matrix(0.8786,0.0005,0,1,585.90,439.15)">Enable VR Settings</div>
<div class="trk" style="left:742.90px;top:441.20px"></div><div class="knob" style="left:742.55px;top:439.85px"></div>

<div class="map" style="left:124.2px;top:381px;width:211.8px;height:90px"><svg style="position:absolute;left:0;top:0" width="211.8" height="90"><circle cx="105.8" cy="106.80" r="50.4" fill="#0288d1" fill-opacity="0.18" stroke="#0d8bd6" stroke-width="1.3"/></svg><div class="zoom" style="left:4.30px;top:4.60px;width:14px;height:26.6px"></div><div style="position:absolute;left:4.30px;top:17.90px;width:14px;height:0.5px;background:#e4e4e4"></div><div style="position:absolute;left:8.70px;top:10.85px;width:5.8px;height:1.3px;background:#111"></div><div style="position:absolute;left:10.95px;top:8.60px;width:1.3px;height:5.8px;background:#111"></div><div style="position:absolute;left:8.70px;top:24.40px;width:5.8px;height:1.4px;background:#8a8580"></div><svg style="position:absolute;left:7.10px;top:38.00px" width="9.4" height="9.4" viewBox="0 0 24 24"><path fill="#212121" stroke="#212121" stroke-width="0.8" d="M12,9A3,3 0 0,0 9,12A3,3 0 0,0 12,15A3,3 0 0,0 15,12A3,3 0 0,0 12,9M19,19H15V21H19A2,2 0 0,0 21,19V15H19M19,3H15V5H19V9H21V5A2,2 0 0,0 19,3M5,5H9V3H5A2,2 0 0,0 3,5V9H5M5,15H3V19A2,2 0 0,0 5,21H9V19H5V15Z"/></svg></div>
</body></html>
